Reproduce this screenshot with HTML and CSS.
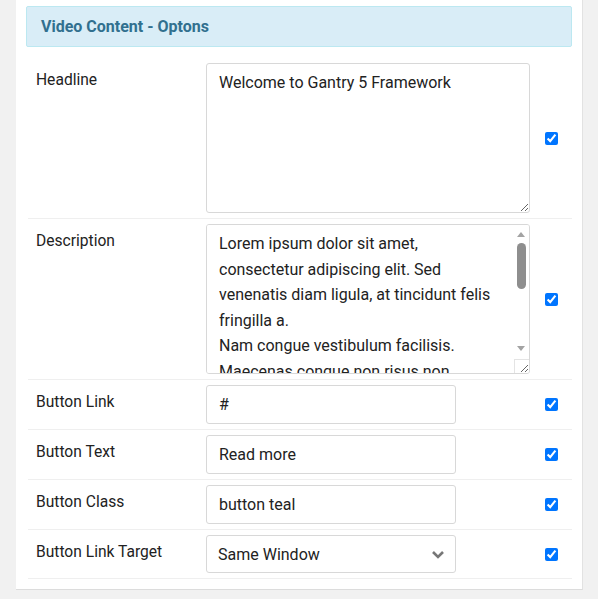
FILE: index.html
```html
<!DOCTYPE html>
<html lang="en">
<head>
  <meta charset="UTF-8" />
  <title>Video Content - Options</title>
  <link rel="stylesheet" href="styles.css">
</head>
<body>
  <div class="panel">
    <h3 class="panel-title">Video Content - Optons</h3>

    <!-- Headline -->
    <div class="row">
      <label class="row-label" for="headline">Headline</label>
      <div class="row-field">
        <textarea id="headline" class="field field-area">Welcome to Gantry 5 Framework</textarea>
      </div>
      <div class="row-check"><input type="checkbox" checked></div>
    </div>

    <!-- Description (scrollable) -->
    <div class="row">
      <label class="row-label" for="description">Description</label>
      <div class="row-field area-wrap">
        <textarea id="description" class="field field-area field-scroll">Lorem ipsum dolor sit amet, consectetur adipiscing elit. Sed venenatis diam ligula, at tincidunt felis fringilla a.
Nam congue vestibulum facilisis. Maecenas congue non risus non pellentesque. Nunc at tellus quis nulla fringilla ullamcorper.</textarea>
        <div class="scrollbar">
          <span class="scroll-up"></span>
          <span class="scroll-thumb"></span>
          <span class="scroll-down"></span>
          <span class="scroll-corner"></span>
        </div>
      </div>
      <div class="row-check"><input type="checkbox" checked></div>
    </div>

    <div class="row">
      <label class="row-label" for="link">Button Link</label>
      <div class="row-field">
        <input type="text" id="link" class="field field-short" value="#">
      </div>
      <div class="row-check"><input type="checkbox" checked></div>
    </div>

    <div class="row">
      <label class="row-label" for="btntext">Button Text</label>
      <div class="row-field">
        <input type="text" id="btntext" class="field field-short" value="Read more">
      </div>
      <div class="row-check"><input type="checkbox" checked></div>
    </div>

    <div class="row">
      <label class="row-label" for="btnclass">Button Class</label>
      <div class="row-field">
        <input type="text" id="btnclass" class="field field-short" value="button teal">
      </div>
      <div class="row-check"><input type="checkbox" checked></div>
    </div>

    <div class="row">
      <label class="row-label" for="target">Button Link Target</label>
      <div class="row-field">
        <div class="select-wrap">
          <select id="target" class="field field-short field-select">
            <option>Same Window</option>
            <option>New Window</option>
          </select>
          <svg class="select-arrow" width="14" height="9" viewBox="0 0 14 9">
            <path d="M2 2 L7 7 L12 2" fill="none" stroke="#777" stroke-width="2.6" />
          </svg>
        </div>
      </div>
      <div class="row-check"><input type="checkbox" checked></div>
    </div>
  </div>
</body>
</html>
```

FILE: styles.css
```css
body {
  margin: 0;
  background-color: #f1f1f1;
  font-family: Roboto, 'Liberation Sans', sans-serif;
  color: #222;
}

.panel {
  background: white;
  margin: 0 15px 0 16px;
  padding: 6px 10px 10px 10px;
  border-right: 1px solid #e2e2e2;
  border-bottom: 1px solid #dcdcdc;
}

.panel-title {
  margin: 0 0 10px 0;
  padding: 11px 14px 10px;
  background-color: #d9edf7;
  border: 1px solid #bce8f1;
  border-radius: 2px;
  color: #31708f;
  font-size: 16px;
  font-weight: bold;
  line-height: 18px;
}

.row {
  display: grid;
  grid-template-columns: 178px 324px 1fr;
  margin-left: 2px;
  padding: 5px 0;
  border-bottom: 1px solid #efefef;
}

.row:first-of-type {
  padding-top: 6px;
}

.row-label {
  padding: 6px 0 0 8px;
  font-size: 15.6px;
  line-height: 22px;
}

.row-check {
  display: flex;
  align-items: center;
  justify-content: center;
  padding-left: 1px;
}

.row-check input {
  margin: 0;
  width: 13px;
  height: 13px;
}

.field {
  box-sizing: border-box;
  border: 1px solid #d8d8d8;
  border-radius: 3px;
  background: white;
  font-family: Roboto, 'Liberation Sans', sans-serif;
  font-size: 16px;
  color: #222;
  padding: 0 12px;
  outline: none;
}

.field-area {
  display: block;
  width: 324px;
  height: 150px;
  padding: 6px 15px 6px 12px;
  line-height: 25.5px;
  resize: vertical;
}

.area-wrap {
  position: relative;
}

.field-scroll {
  padding-right: 28px;
  scrollbar-width: none;
}

.scrollbar {
  position: absolute;
  top: 1px;
  right: 1px;
  bottom: 1px;
  width: 15px;
  pointer-events: none;
}

.scroll-up,
.scroll-down {
  position: absolute;
  left: 3px;
  width: 0;
  height: 0;
  border-left: 4.5px solid transparent;
  border-right: 4.5px solid transparent;
}

.scroll-up {
  top: 7px;
  border-bottom: 5px solid #a3a3a3;
}

.scroll-down {
  bottom: 22px;
  border-top: 5px solid #a3a3a3;
}

.scroll-thumb {
  position: absolute;
  top: 18px;
  left: 3px;
  width: 9px;
  height: 46px;
  border-radius: 5px;
  background: #8e8e8e;
}

.scroll-corner {
  position: absolute;
  right: 0;
  bottom: 0;
  width: 14px;
  height: 13px;
  border-top: 1px solid #e4e4e4;
  border-left: 1px solid #e4e4e4;
}

.field-short {
  display: block;
  width: 250px;
  height: 39px;
  line-height: 37px;
}

.select-wrap {
  position: relative;
  width: 250px;
}

.field-select {
  appearance: none;
  -webkit-appearance: none;
  height: 38px;
  padding-left: 11px;
}

.select-arrow {
  position: absolute;
  right: 11px;
  top: 15px;
  pointer-events: none;
}
```
